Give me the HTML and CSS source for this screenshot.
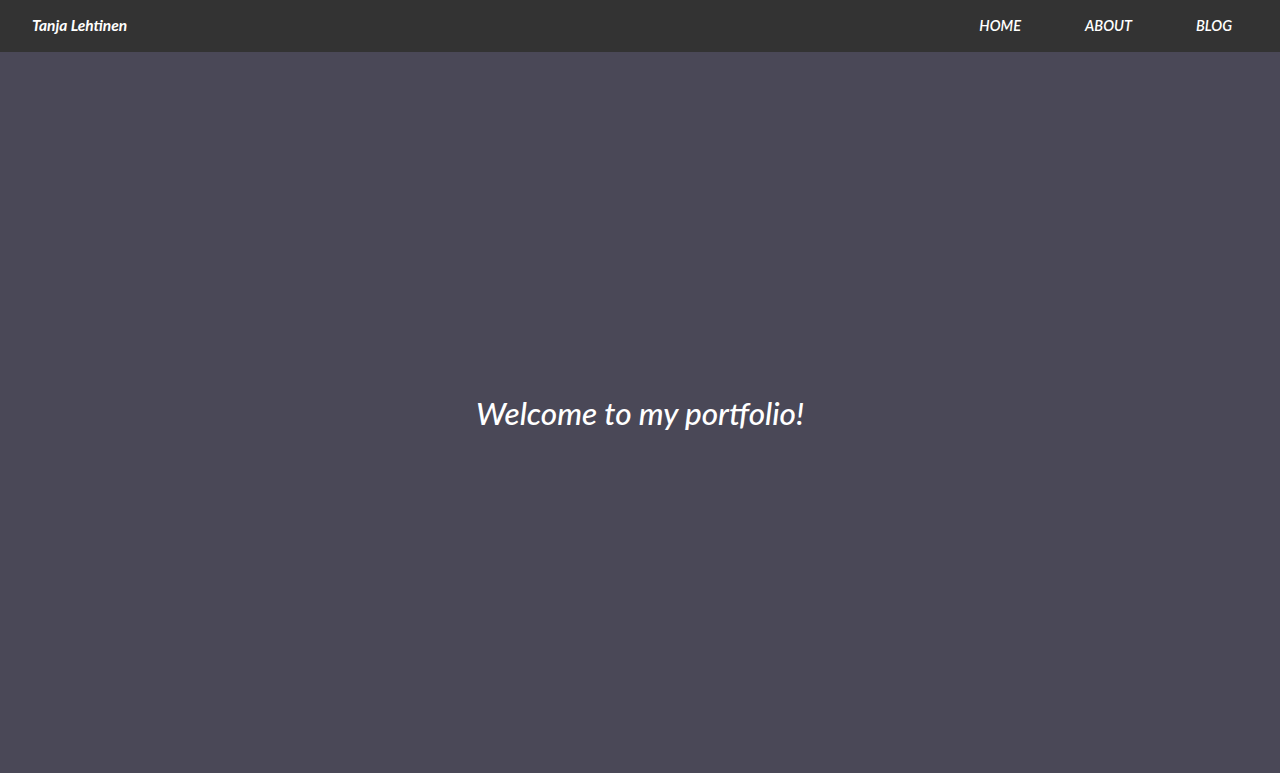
FILE: index.html
```html
<!DOCTYPE html>
<html lang="en">
<head>
<meta charset="utf-8">
<title>Tanja Lehtinen</title>
<link rel="stylesheet" href="styles.css">
</head>
<body>
<header class="navbar">
  <a class="brand" href="#">Tanja Lehtinen</a>
  <nav class="nav-links">
    <a href="#">HOME</a>
    <a href="#">ABOUT</a>
    <a href="#">BLOG</a>
  </nav>
</header>
<main class="hero">
  <h1 class="hero-title">Welcome to my portfolio!</h1>
</main>
</body>
</html>
```
FILE: styles.css
```css
html, body {
  margin: 0;
  padding: 0;
  height: 100%;
}
body {
  display: flex;
  flex-direction: column;
  background: #4a4857;
  font-family: "Lato", "Open Sans", sans-serif;
  font-style: italic;
  color: #ffffff;
}
.navbar {
  height: 52px;
  flex: 0 0 52px;
  background: #333333;
  display: flex;
  align-items: center;
  justify-content: space-between;
  padding: 0 48px 2px 32px;
  box-sizing: border-box;
}
.brand {
  color: #ffffff;
  text-decoration: none;
  font-size: 15.5px;
  font-weight: 700;
}
.nav-links {
  display: flex;
  gap: 64px;
}
.nav-links a {
  color: #ffffff;
  text-decoration: none;
  font-size: 14.5px;
  font-weight: 600;
}
.hero {
  flex: 1;
  display: flex;
  align-items: center;
  justify-content: center;
}
.hero-title {
  margin: 0;
  font-size: 31.5px;
  font-weight: 500;
}
```
